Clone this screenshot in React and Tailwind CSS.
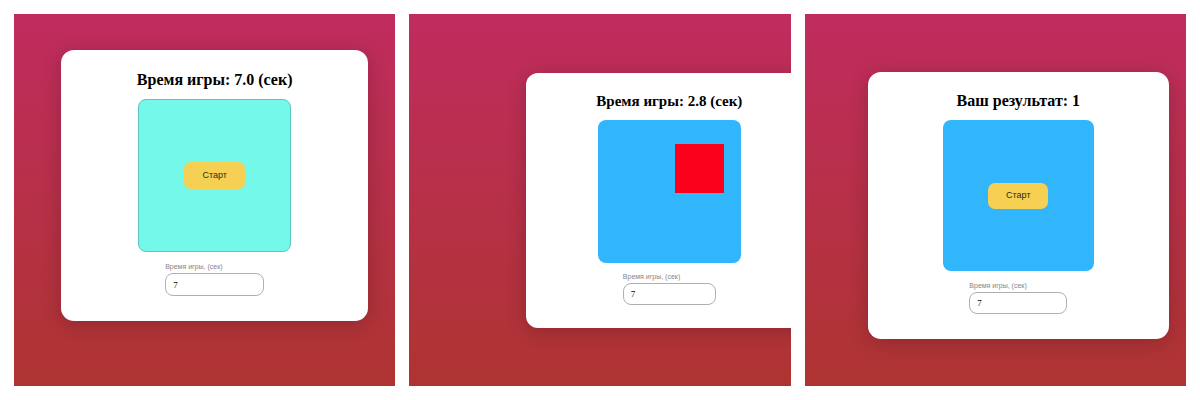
import { useId } from "react";

const screens = [
  {
    title: "Время игры: 7.0 (сек)",
    panel: "pt-9 pl-[47px] pr-[27px]",
    card: "w-full rounded-[13px] pt-5 pb-[25px]",
    heading: "text-[16px]",
    field: "size-[153px] border border-[#5fc4c4] bg-[#73f8ea]",
    button: "h-[27px] w-[61px]",
    form: "mt-[10px] w-[99px]",
    input: "h-[23px]",
    start: true,
  },
  {
    title: "Время игры: 2.8 (сек)",
    panel: "pt-[59px] pl-[117px]",
    card: "w-[286px] shrink-0 rounded-[12px] pt-[18px] pb-[23px]",
    heading: "text-[15px]",
    field: "size-[143px] bg-[#31b6fc]",
    form: "mt-[9px] w-[93px]",
    input: "h-[22px]",
    start: false,
  },
  {
    title: "Ваш результат: 1",
    panel: "pt-[58px] pl-[63px] pr-[17px]",
    card: "w-full rounded-[13px] pt-[19px] pb-[25px]",
    heading: "text-[16px]",
    field: "size-[151px] bg-[#31b6fc]",
    button: "h-[26px] w-[60px]",
    form: "mt-[10px] w-[98px]",
    input: "h-[22px]",
    start: true,
  },
];

function Game({ screen }) {
  const id = useId();
  return (
    <section
      className={`flex items-start overflow-hidden bg-linear-to-b/srgb from-[#c02c5f] to-[#ae3431] ${screen.panel}`}
    >
      <div
        className={`flex flex-col items-center bg-white shadow-[0_3px_20px_rgba(0,0,0,0.2)] ${screen.card}`}
      >
        <h1
          className={`mb-[9px] font-['Liberation_Serif',serif] leading-5 font-bold whitespace-nowrap text-black ${screen.heading}`}
        >
          {screen.title}
        </h1>
        <div className={`relative flex items-center justify-center rounded-lg ${screen.field}`}>
          {screen.start ? (
            <button
              type="button"
              className={`rounded-[7px] bg-[#f5d053] text-[9px] text-[#2b2b20] ${screen.button}`}
            >
              Старт
            </button>
          ) : (
            <button
              type="button"
              aria-label="Цель"
              className="absolute top-6 left-[77px] size-[49px] bg-[#fb001b]"
            />
          )}
        </div>
        <div className={`flex flex-col ${screen.form}`}>
          <label htmlFor={id} className="mb-px text-[7px] leading-[10px] whitespace-nowrap text-[#858585]">
            Время игры, (сек)
          </label>
          <input
            id={id}
            type="text"
            inputMode="numeric"
            defaultValue="7"
            className={`w-full rounded-lg border border-[#b0b0b0] bg-white px-[7px] font-['Liberation_Serif',serif] text-[9px] text-black ${screen.input}`}
          />
        </div>
      </div>
    </section>
  );
}

export default function App() {
  return (
    <main className="grid min-h-screen grid-cols-3 gap-[14px] bg-white p-[14px] font-['Liberation_Sans',sans-serif]">
      {screens.map((screen) => (
        <Game key={screen.title} screen={screen} />
      ))}
    </main>
  );
}
